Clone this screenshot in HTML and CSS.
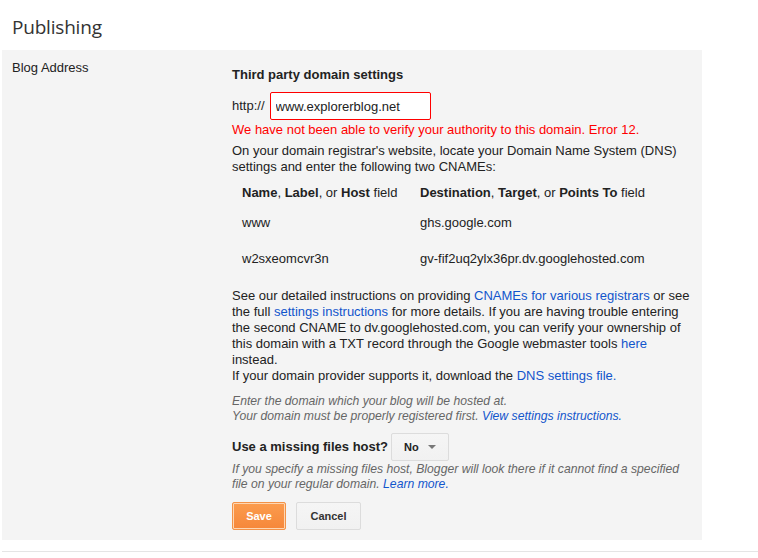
FILE: index.html
```html
<!DOCTYPE html>
<html lang="en">
<head>
<meta charset="UTF-8">
<title>Publishing</title>
<link rel="stylesheet" href="styles.css">
</head>
<body>

<h1 class="page-title">Publishing</h1>

<div class="panel">
    <div class="label-col">Blog Address</div>
    <div class="content-col">
        <div class="section-title">Third party domain settings</div>
        <div class="address-row">
            <span>http://</span>
            <input type="text" class="domain-input" value="www.explorerblog.net">
        </div>
        <div class="error-text">We have not been able to verify your authority to this domain. Error 12.</div>
        <p class="intro">On your domain registrar's website, locate your Domain Name System (DNS) settings and enter the following two CNAMEs:</p>

        <table class="cname-table">
            <thead>
                <tr>
                    <th><b>Name</b>, <b>Label</b>, or <b>Host</b> field</th>
                    <th><b>Destination</b>, <b>Target</b>, or <b>Points To</b> field</th>
                </tr>
            </thead>
            <tbody>
                <tr>
                    <td>www</td>
                    <td>ghs.google.com</td>
                </tr>
                <tr>
                    <td>w2sxeomcvr3n</td>
                    <td>gv-fif2uq2ylx36pr.dv.googlehosted.com</td>
                </tr>
            </tbody>
        </table>

        <p class="details">See our detailed instructions on providing <a href="#">CNAMEs for various registrars</a> or see the full <a href="#">settings instructions</a> for more details. If you are having trouble entering the second CNAME to dv.googlehosted.com, you can verify your ownership of this domain with a TXT record through the Google webmaster tools <a href="#">here</a> instead.<br>
        If your domain provider supports it, download the <a href="#">DNS settings file.</a></p>

        <p class="help help-first">Enter the domain which your blog will be hosted at.<br>
        Your domain must be properly registered first. <a href="#">View settings instructions.</a></p>

        <div class="host-row">
            <span class="host-label">Use a missing files host?</span>
            <div class="dropdown">No <span class="arrow"></span></div>
        </div>
        <p class="help help-second">If you specify a missing files host, Blogger will look there if it cannot find a specified file on your regular domain. <a href="#">Learn more.</a></p>

        <div class="buttons">
            <button class="save-button">Save</button>
            <button class="cancel-button">Cancel</button>
        </div>
    </div>
</div>

<div class="divider"></div>

</body>
</html>
```

FILE: styles.css
```css
body {
    font-family: "Liberation Sans", Arial, sans-serif;
    font-size: 13px;
    color: #222;
    margin: 0;
    padding: 0;
    background: #fff;
}
a {
    color: #15c;
    text-decoration: none;
}
.page-title {
    font-family: "Open Sans", sans-serif;
    font-weight: normal;
    font-size: 19px;
    letter-spacing: -0.2px;
    line-height: 28px;
    color: #333;
    margin: 0 0 9px 0;
    padding: 13px 0 0 12px;
}
.panel {
    display: flex;
    width: 700px;
    box-sizing: border-box;
    margin-left: 2px;
    padding: 10px 12px 10px 10px;
    background-color: #f4f4f4;
    line-height: 16px;
}
.label-col {
    width: 220px;
    flex-shrink: 0;
}
.content-col {
    flex: 1;
    padding-top: 7px;
}
.section-title {
    font-weight: bold;
}
.address-row {
    display: flex;
    align-items: center;
    gap: 5px;
    margin-top: 9px;
}
.domain-input {
    width: 161px;
    height: 28px;
    box-sizing: border-box;
    border: 1px solid #f00;
    border-radius: 2px;
    padding: 0 5px;
    font-family: "Liberation Sans", Arial, sans-serif;
    font-size: 13px;
    color: #222;
    background: #fff;
}
.error-text {
    color: #f00;
    margin-top: 2px;
}
.intro {
    margin: 5px 0 0 0;
}
.cname-table {
    border-collapse: collapse;
    margin: 0;
}
.cname-table th {
    font-weight: normal;
    text-align: left;
    padding: 10px 10px 4px 10px;
}
.cname-table td {
    padding: 10px;
}
.cname-table th:first-child, .cname-table td:first-child {
    width: 158px;
}
.details {
    margin: 11px 0 0 0;
}
.help {
    font-size: 12.2px;
    line-height: 15px;
    font-style: italic;
    color: #666;
    margin: 0;
}
.help-first {
    margin-top: 10px;
}
.help-second {
    margin-top: 1px;
}
.host-row {
    display: flex;
    align-items: center;
    gap: 3px;
    margin-top: 9px;
}
.host-label {
    font-weight: bold;
}
.dropdown {
    width: 58px;
    height: 28px;
    box-sizing: border-box;
    display: flex;
    align-items: center;
    padding-left: 12px;
    border: 1px solid #dcdcdc;
    border-radius: 2px;
    background: linear-gradient(#f5f5f5, #f1f1f1);
    font-size: 11px;
    font-weight: bold;
    color: #222;
}
.arrow {
    display: inline-block;
    margin-left: 9px;
    border-left: 4px solid transparent;
    border-right: 4px solid transparent;
    border-top: 4px solid #777;
}
.buttons {
    display: flex;
    gap: 10px;
    margin-top: 10px;
}
.save-button, .cancel-button {
    height: 28px;
    box-sizing: border-box;
    border-radius: 2px;
    font-family: "Liberation Sans", Arial, sans-serif;
    font-size: 11px;
    font-weight: bold;
    padding: 0;
    cursor: pointer;
}
.save-button {
    width: 54px;
    color: #fff;
    border: 1px solid #f39247;
    box-shadow: inset 0 0 0 1px #fed6b2;
    background: linear-gradient(#fb9c4e, #f6873a);
}
.cancel-button {
    width: 65px;
    color: #333;
    border: 1px solid #dcdcdc;
    background: linear-gradient(#f5f5f5, #f1f1f1);
}
.divider {
    margin: 11px 0 0 2px;
    border-top: 1px solid #e5e5e5;
}
```
